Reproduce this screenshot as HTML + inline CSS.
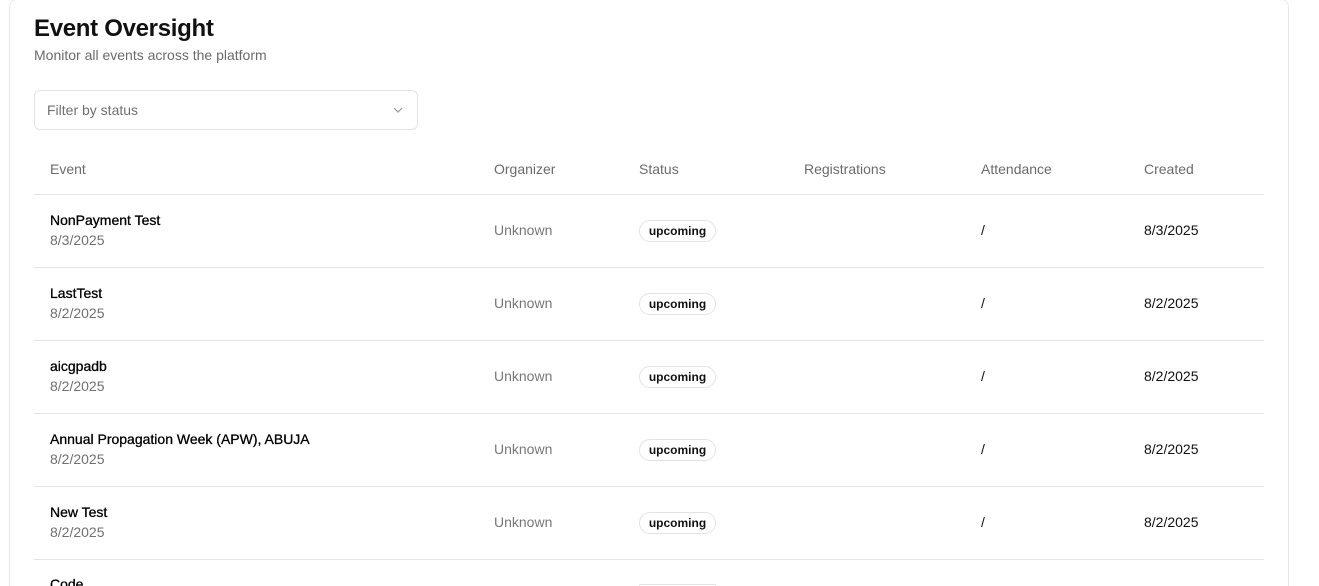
<!DOCTYPE html>
<html><head><meta charset="utf-8"><style>
*{box-sizing:border-box;margin:0;padding:0}
html,body{width:1319px;height:586px;overflow:hidden}
body{background:#fff;font-family:"Liberation Sans",sans-serif;color:#111}
.wrap{position:relative;width:1319px;height:586px;overflow:hidden}
.card{position:absolute;left:9px;top:-1px;width:1280px;height:587px;border:1px solid #e8e8e8;border-bottom:none;border-radius:8px 8px 0 0;background:#fff}
h1{position:absolute;left:34px;top:15px;font-size:24px;font-weight:600;letter-spacing:-0.3px}
.sub{position:absolute;left:34px;top:47px;font-size:14px;color:#6b6b6b}
.sel{position:absolute;left:34px;top:90px;width:384px;height:40px;border:1px solid #e3e3e3;border-radius:6px;font-size:14px;color:#707070;padding:11px 12px}
.sel svg{position:absolute;right:14px;top:16px}
.th{position:absolute;top:161px;font-size:14px;color:#6b6b6b}
.line{position:absolute;left:34px;width:1230px;height:1px;background:#e5e5e5}
.t{position:absolute;font-size:14px}
.name{color:#000;-webkit-text-stroke:0.3px #000}
.d{color:#707070}
.g{color:#777}
.badge{position:absolute;left:639px;width:77px;height:22px;border:1px solid #e3e3e3;border-radius:11px;font-size:12px;font-weight:700;text-align:center;line-height:20px}
</style></head><body><div class="wrap">
<div class="card"></div>
<h1>Event Oversight</h1>
<div class="sub">Monitor all events across the platform</div>
<div class="sel">Filter by status<svg width="10" height="6" viewBox="0 0 10 6"><path d="M1 1l4 4 4-4" fill="none" stroke="#999" stroke-width="1.2"/></svg></div>
<div class="th" style="left:50px">Event</div>
<div class="th" style="left:494px">Organizer</div>
<div class="th" style="left:639px">Status</div>
<div class="th" style="left:804px">Registrations</div>
<div class="th" style="left:981px">Attendance</div>
<div class="th" style="left:1144px">Created</div>
<div class="line" style="top:194px"></div>

<div class="t name" style="left:50px;top:212px">NonPayment Test</div>
<div class="t d" style="left:50px;top:232px">8/3/2025</div>
<div class="t g" style="left:494px;top:222px">Unknown</div>
<div class="badge" style="top:220px">upcoming</div>
<div class="t" style="left:981px;top:222px">/</div>
<div class="t" style="left:1144px;top:222px">8/3/2025</div>
<div class="line" style="top:267px"></div>

<div class="t name" style="left:50px;top:285px">LastTest</div>
<div class="t d" style="left:50px;top:305px">8/2/2025</div>
<div class="t g" style="left:494px;top:295px">Unknown</div>
<div class="badge" style="top:293px">upcoming</div>
<div class="t" style="left:981px;top:295px">/</div>
<div class="t" style="left:1144px;top:295px">8/2/2025</div>
<div class="line" style="top:340px"></div>

<div class="t name" style="left:50px;top:358px">aicgpadb</div>
<div class="t d" style="left:50px;top:378px">8/2/2025</div>
<div class="t g" style="left:494px;top:368px">Unknown</div>
<div class="badge" style="top:366px">upcoming</div>
<div class="t" style="left:981px;top:368px">/</div>
<div class="t" style="left:1144px;top:368px">8/2/2025</div>
<div class="line" style="top:413px"></div>

<div class="t name" style="left:50px;top:431px">Annual Propagation Week (APW), ABUJA</div>
<div class="t d" style="left:50px;top:451px">8/2/2025</div>
<div class="t g" style="left:494px;top:441px">Unknown</div>
<div class="badge" style="top:439px">upcoming</div>
<div class="t" style="left:981px;top:441px">/</div>
<div class="t" style="left:1144px;top:441px">8/2/2025</div>
<div class="line" style="top:486px"></div>

<div class="t name" style="left:50px;top:504px">New Test</div>
<div class="t d" style="left:50px;top:524px">8/2/2025</div>
<div class="t g" style="left:494px;top:514px">Unknown</div>
<div class="badge" style="top:512px">upcoming</div>
<div class="t" style="left:981px;top:514px">/</div>
<div class="t" style="left:1144px;top:514px">8/2/2025</div>
<div class="line" style="top:559px"></div>

<div class="t name" style="left:50px;top:576px;height:10px;overflow:hidden">Code</div>
<div class="badge" style="top:584px;height:2px;overflow:hidden;border-bottom:none"></div>
</div></body></html>
